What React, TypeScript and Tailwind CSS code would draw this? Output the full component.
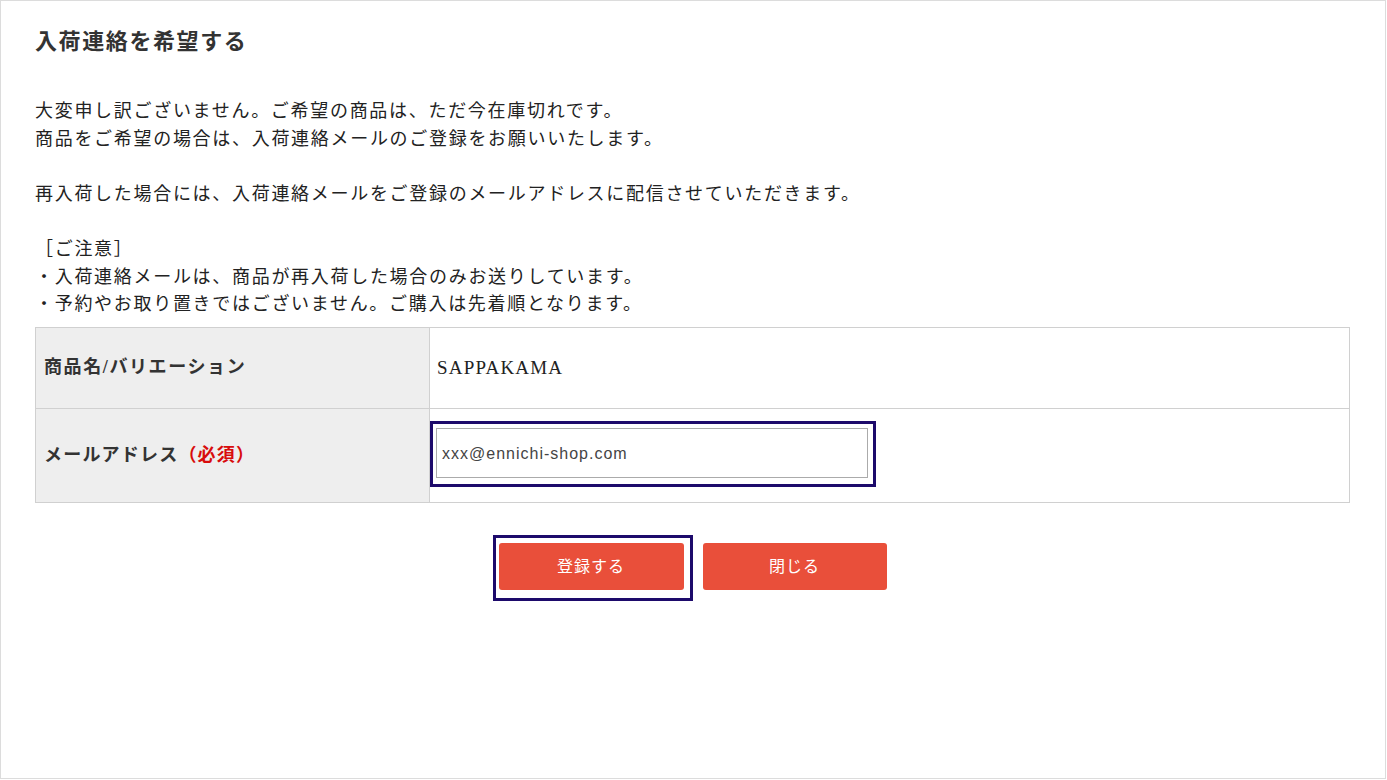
import React from 'react';

const jp = "font-['Liberation_Serif','Noto_Sans_CJK_JP',serif]";

export default function App() {
    return (
        <div className="w-[1387px] h-[780px] bg-white">
            <div className={`w-[1386px] h-[779px] border border-[#dcdcdc] pl-[34px] pr-[35px] pt-[26px] text-[#222] tracking-[1.7px] ${jp}`}>
                {/* 見出し */}
                <h1 className="text-[22px] leading-[30px] font-bold text-[#333] tracking-[1.6px]">入荷連絡を希望する</h1>

                {/* 説明文 */}
                <p className="mt-[41px] text-[18px] leading-[27.6px]">
                    大変申し訳ございません。ご希望の商品は、ただ今在庫切れです。<br />
                    商品をご希望の場合は、入荷連絡メールのご登録をお願いいたします。<br />
                    <br />
                    再入荷した場合には、入荷連絡メールをご登録のメールアドレスに配信させていただきます。<br />
                    <br />
                    ［ご注意］<br />
                    ・入荷連絡メールは、商品が再入荷した場合のみお送りしています。<br />
                    ・予約やお取り置きではございません。ご購入は先着順となります。
                </p>

                {/* 入力テーブル */}
                <table className="mt-[8px] w-full border-collapse border border-[#d0d0d0]">
                    <tbody>
                        <tr className="h-[81px]">
                            <th className="w-[394px] bg-[#eeeeee] border border-[#d0d0d0] text-left align-middle pl-[8px] text-[18px] font-bold text-[#333] tracking-[1.6px]">
                                商品名/バリエーション
                            </th>
                            <td className="border border-[#d0d0d0] pl-[7px] align-middle text-[19px] tracking-[1.2px]">SAPPAKAMA</td>
                        </tr>
                        <tr className="h-[94px]">
                            <th className="bg-[#eeeeee] border border-[#d0d0d0] text-left align-middle pl-[8px] text-[18px] font-bold text-[#333] tracking-[1.2px]">
                                メールアドレス<span className="text-[#d80c0c]">（必須）</span>
                            </th>
                            <td className="border border-[#d0d0d0] pl-[6px] pb-[4px] align-middle">
                                <div className="relative w-[432px] h-[50px]">
                                    <input
                                        type="text"
                                        defaultValue="xxx@ennichi-shop.com"
                                        className="w-full h-full border border-[#ababab] bg-white px-[5px] pt-[1px] text-[16px] tracking-[1px] text-[#444] font-['Liberation_Sans',sans-serif] outline-none"
                                    />
                                    {/* フォーカスリング */}
                                    <span className="absolute left-[-6px] top-[-7px] right-[-8px] bottom-[-9px] border-[3px] border-[#1d0a6b] pointer-events-none" />
                                </div>
                            </td>
                        </tr>
                    </tbody>
                </table>

                {/* ボタン */}
                <div className="mt-[40px] flex justify-center gap-[19px]">
                    <button className="relative w-[185px] h-[47px] rounded-[3px] bg-[#e94f3a] text-white text-[16px] tracking-[1px] pb-[2px] font-['Noto_Sans_CJK_JP',sans-serif]">
                        登録する
                        <span className="absolute left-[-6px] top-[-8px] right-[-9px] bottom-[-11px] border-[3px] border-[#1d0a6b] pointer-events-none" />
                    </button>
                    <button className="w-[184px] h-[47px] rounded-[3px] bg-[#e94f3a] text-white text-[16px] tracking-[1px] pb-[2px] font-['Noto_Sans_CJK_JP',sans-serif]">
                        閉じる
                    </button>
                </div>
            </div>
        </div>
    );
}
